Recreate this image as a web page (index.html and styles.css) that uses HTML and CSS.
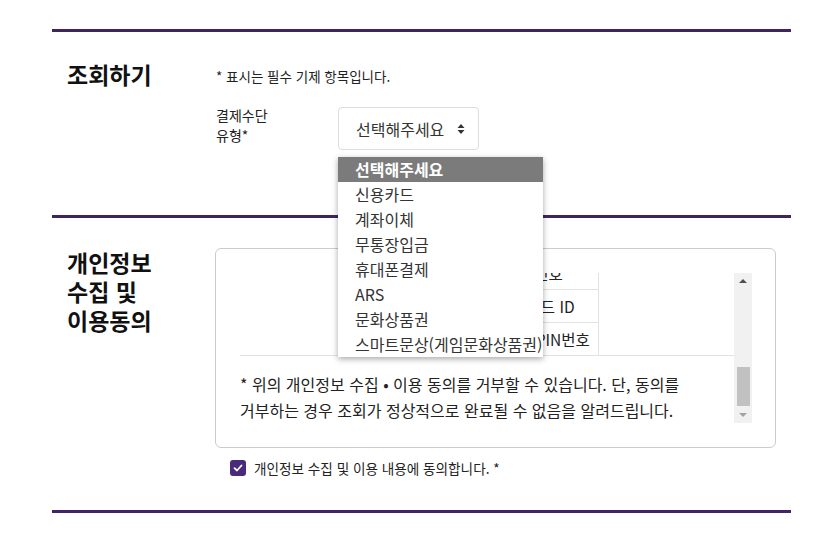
FILE: index.html
```html
<!DOCTYPE html>
<html lang="ko">
<head>
    <meta charset="UTF-8">
    <meta name="viewport" content="width=device-width, initial-scale=1.0">
    <title>조회하기</title>
    <link rel="stylesheet" href="styles.css">
</head>
<body>
    <div class="wrap">
        <section class="sec sec-search">
            <h2 class="sec-title">조회하기</h2>
            <div class="sec-body">
                <p class="note">* 표시는 필수 기제 항목입니다.</p>
                <div class="field">
                    <label class="field-label">결제수단<br>유형*</label>
                    <div class="select-wrap">
                        <div class="select">
                            <span>선택해주세요</span>
                            <svg class="arrows" width="8" height="10" viewBox="0 0 8 10">
                                <path d="M4 0 L7.5 4 L0.5 4 Z" fill="#333"/>
                                <path d="M4 10 L7.5 6 L0.5 6 Z" fill="#333"/>
                            </svg>
                        </div>
                        <ul class="options">
                            <li class="on">선택해주세요</li>
                            <li>신용카드</li>
                            <li>계좌이체</li>
                            <li>무통장입금</li>
                            <li>휴대폰결제</li>
                            <li>ARS</li>
                            <li>문화상품권</li>
                            <li>스마트문상(게임문화상품권)</li>
                        </ul>
                    </div>
                </div>
            </div>
        </section>

        <section class="sec sec-agree">
            <h2 class="sec-title">개인정보<br>수집 및<br>이용동의</h2>
            <div class="sec-body">
                <div class="terms">
                    <div class="terms-view">
                        <div class="terms-inner">
                            <p class="terms-head">개인정보 수집 및 이용 안내</p>
                            <table class="terms-table">
                                <tr>
                                    <th>수집목적</th>
                                    <th>수집항목</th>
                                    <th>보유기간</th>
                                </tr>
                                <tr>
                                    <td class="top" rowspan="5">결제내역 조회</td>
                                    <td>결제일시, 결제금액</td>
                                    <td rowspan="5"></td>
                                </tr>
                                <tr>
                                    <td>카드번호, 휴대폰번호</td>
                                </tr>
                                <tr>
                                    <td>입금자명, 계좌번호</td>
                                </tr>
                                <tr>
                                    <td>해피머니 · 컬처랜드 ID</td>
                                </tr>
                                <tr>
                                    <td>스마트문상 상품권 PIN번호</td>
                                </tr>
                            </table>
                            <p class="terms-text">* 위의 개인정보 수집 • 이용 동의를 거부할 수 있습니다. 단, 동의를 거부하는 경우 조회가 정상적으로 완료될 수 없음을 알려드립니다.</p>
                        </div>
                    </div>
                    <div class="bar">
                        <span class="bar-up"></span>
                        <span class="bar-thumb"></span>
                        <span class="bar-down"></span>
                    </div>
                </div>
                <label class="check">
                    <span class="check-box">
                        <svg width="10" height="8" viewBox="0 0 10 8">
                            <path d="M1.5 4.2 L4 6.5 L8.5 1.5" fill="none" stroke="#fff" stroke-width="1.8" stroke-linecap="round" stroke-linejoin="round"/>
                        </svg>
                    </span>
                    개인정보 수집 및 이용 내용에 동의합니다. *
                </label>
            </div>
        </section>
    </div>
</body>
</html>
```

FILE: styles.css
```css
* {
    box-sizing: border-box;
}

body {
    margin: 0;
    background: #fff;
    color: #222;
    font-family: "Noto Sans CJK KR", "Noto Sans", sans-serif;
}

.wrap {
    width: 739px;
    margin: 29px 0 0 52px;
    border-bottom: 3px solid #42246a;
}

.sec {
    display: flex;
    border-top: 3px solid #3e2560;
}

.sec-title {
    width: 164px;
    flex: none;
    margin: 0;
    padding-left: 15px;
    font-size: 23px;
    line-height: 29px;
    font-weight: 700;
    color: #111;
}

.sec-body {
    flex: 1;
}

/* 조회하기 */
.sec-search {
    height: 186px;
    padding-top: 28px;
}

.note {
    margin: 7px 0 0;
    font-size: 13.5px;
    line-height: 18px;
}

.field {
    display: flex;
    margin-top: 22px;
}

.field-label {
    width: 122px;
    margin-top: -2px;
    font-size: 14px;
    line-height: 20px;
}

.select-wrap {
    position: relative;
}

.select {
    display: flex;
    align-items: center;
    justify-content: space-between;
    width: 141px;
    height: 43px;
    padding: 0 13px 0 17px;
    border: 1px solid #ddd;
    border-radius: 4px;
    font-size: 16px;
    color: #333;
}

.options {
    position: absolute;
    top: 50px;
    left: 0;
    width: 205px;
    margin: 0;
    padding: 0;
    list-style: none;
    background: #fff;
    box-shadow: 0 2px 6px rgba(0, 0, 0, 0.35);
    z-index: 10;
}

.options li {
    height: 25px;
    padding-left: 17px;
    font-size: 16px;
    line-height: 25px;
    color: #333;
    white-space: nowrap;
}

.options li.on {
    background: #7b7b7b;
    color: #fff;
    font-weight: 700;
}

/* 개인정보 수집 및 이용동의 */
.sec-agree {
    padding: 30px 0 34px;
}

.terms {
    display: flex;
    width: 561px;
    height: 200px;
    margin-left: -1px;
    padding: 24px 23px 24px 24px;
    border: 1px solid #ccc;
    border-radius: 6px;
}

.terms-view {
    flex: 1;
    height: 150px;
    overflow: hidden;
    display: flex;
    flex-direction: column-reverse;
}

.terms-inner {
    flex: none;
}

.terms-head {
    margin: 0 0 12px;
    font-size: 16px;
    font-weight: 700;
    line-height: 24px;
}

.terms-table {
    width: 100%;
    border-collapse: collapse;
    font-size: 15.5px;
    color: #222;
}

.terms-table th,
.terms-table td {
    height: 33px;
    padding: 0 6px;
    border: 1px solid #e2e2e2;
    text-align: center;
    font-weight: 400;
    white-space: nowrap;
}

.terms-table td.top {
    vertical-align: top;
    padding-top: 6px;
}

.terms-table th {
    background: #f6f6f6;
}

.terms-table tr:first-child th {
    border-top: 0;
}

.terms-table th:first-child,
.terms-table td:first-child {
    border-left: 0;
    width: 160px;
}

.terms-table th:last-child,
.terms-table td[rowspan]:last-child {
    border-right: 0;
    width: 132px;
}

.terms-text {
    margin: 15px 0 0;
    font-size: 16px;
    line-height: 26px;
    color: #222;
    word-break: keep-all;
}

/* 스크롤바 */
.bar {
    position: relative;
    width: 18px;
    flex: none;
    background: #f1f1f1;
}

.bar-up,
.bar-down {
    position: absolute;
    left: 5px;
    width: 0;
    height: 0;
    border-left: 4px solid transparent;
    border-right: 4px solid transparent;
}

.bar-up {
    top: 6px;
    border-bottom: 4px solid #505050;
}

.bar-down {
    bottom: 6px;
    border-top: 4px solid #a3a3a3;
}

.bar-thumb {
    position: absolute;
    top: 94px;
    left: 3px;
    width: 13px;
    height: 39px;
    background: #c1c1c1;
}

.check {
    display: flex;
    align-items: center;
    gap: 8px;
    margin: 12px 0 0 14px;
    font-size: 13.6px;
    line-height: 16px;
}

.check-box {
    display: flex;
    align-items: center;
    justify-content: center;
    width: 16px;
    height: 16px;
    border-radius: 3px;
    background: #4a2a7c;
}
```
